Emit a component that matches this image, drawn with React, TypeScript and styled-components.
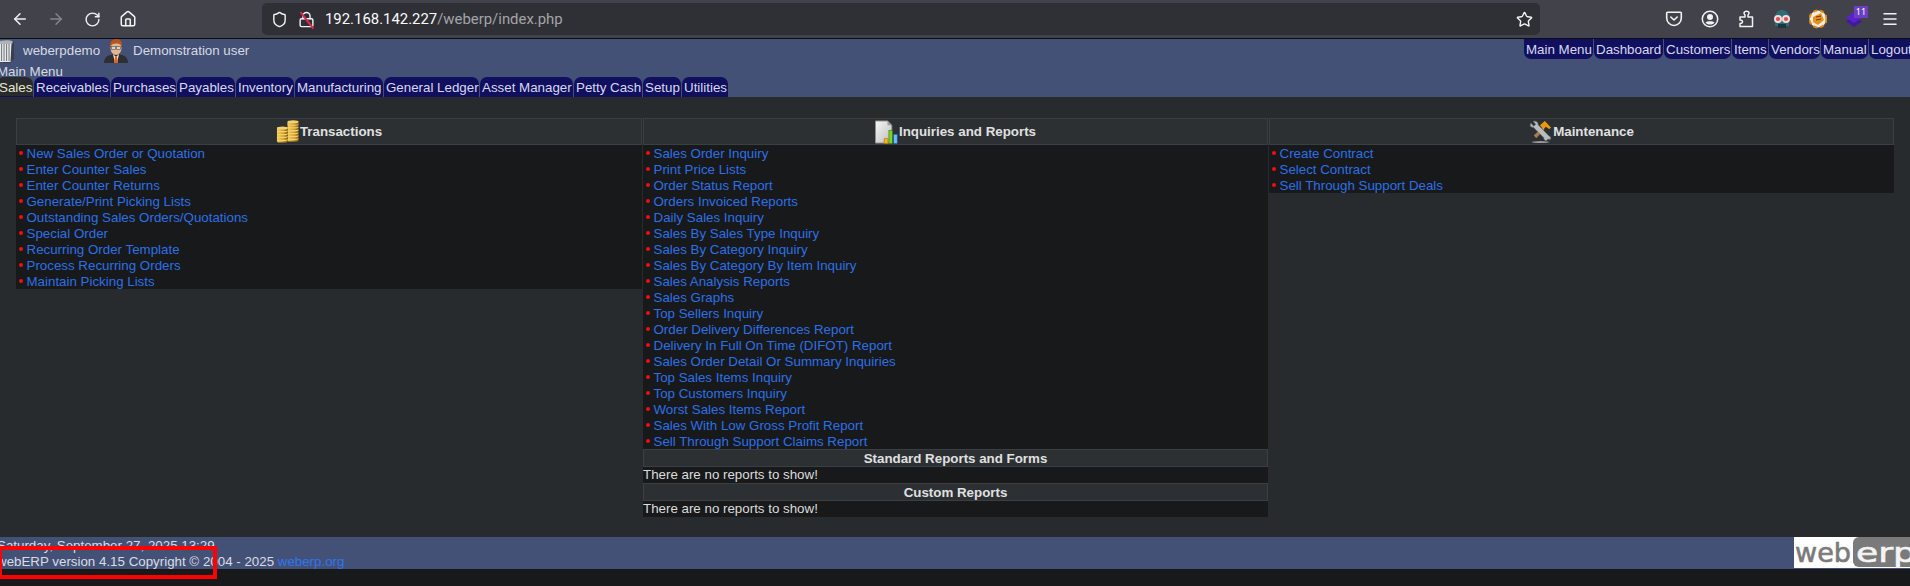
import React from 'react';
import styled, { createGlobalStyle } from 'styled-components';
import {
  ArrowLeft,
  ArrowRight,
  RotateCw,
  Home,
  Shield,
  Lock,
  Star,
  Menu
} from 'lucide-react';

const GlobalStyle = createGlobalStyle`
  html, body {
    margin: 0;
    padding: 0;
    background: #18191b;
    overflow: hidden;
  }
  #root {
    width: 1910px;
    height: 586px;
    overflow: hidden;
  }
`;

const Screen = styled.div`
  position: relative;
  width: 1910px;
  height: 586px;
  overflow: hidden;
  background: #18191b;
  font-family: 'Liberation Sans', Arial, sans-serif;
  font-size: 13.33px;
  color: #e0e0e0;
`;

const Toolbar = styled.div`
  display: flex;
  align-items: center;
  height: 38px;
  padding: 0 2px;
  background: #42434a;
  border-bottom: 1px solid #0c0c0d;
`;

const ToolButton = styled.div<{ $dim?: boolean }>`
  display: flex;
  align-items: center;
  justify-content: center;
  flex: none;
  width: 36px;
  height: 36px;
  color: ${props => (props.$dim ? '#85868b' : '#f2f2f4')};
`;

const ExtensionButton = styled(ToolButton)`
  position: relative;
`;

const Badge = styled.div`
  position: absolute;
  top: 5px;
  right: 4px;
  width: 14px;
  height: 12px;
  background: #6b3fc4;
  color: #fff;
  font-family: 'Noto Sans', sans-serif;
  font-size: 9px;
  line-height: 12px;
  text-align: center;
`;

const UrlBar = styled.div`
  display: flex;
  align-items: center;
  flex: 1;
  height: 32px;
  margin: 0 116px;
  padding: 0 7px 0 9px;
  border-radius: 5px;
  background: #2f3035;
  color: #f2f2f4;
`;

const UrlIcon = styled.div`
  display: flex;
  position: relative;
  flex: none;
  margin-right: 10px;
`;

const Slash = styled.div`
  position: absolute;
  left: 8px;
  top: -1px;
  width: 1.5px;
  height: 21px;
  background: #e22850;
  transform: rotate(-38deg);
`;

const UrlText = styled.div`
  flex: 1;
  font-family: Roboto, 'Noto Sans', sans-serif;
  font-size: 14.9px;
  color: #fbfbfe;
`;

const UrlPath = styled.span`
  color: #a4a4a8;
`;

const Page = styled.div`
  width: 1919px;
  margin-left: -3px;
`;

const Header = styled.header`
  display: flex;
  flex-direction: column;
  height: 58px;
  background: #445177;
`;

const HeaderTop = styled.div`
  display: flex;
  justify-content: space-between;
  height: 26px;
`;

const Identity = styled.div`
  display: flex;
  align-items: flex-start;
  color: #d7d9e2;
`;

const IdentityText = styled.span<{ $inset: number; $width: number }>`
  width: ${props => `${props.$width}px`};
  margin-top: 4px;
  padding-left: ${props => `${props.$inset}px`};
  line-height: 15px;
`;

const TopMenu = styled.nav`
  display: flex;
  gap: 1px;
`;

const TopTab = styled.a<{ $width: number }>`
  display: block;
  box-sizing: border-box;
  width: ${props => `${props.$width}px`};
  height: 20px;
  padding-left: 2px;
  border-radius: 0 0 7px 7px;
  background: #10105f;
  color: #d9d9ef;
  line-height: 21px;
  white-space: nowrap;
`;

const MenuTitle = styled.div`
  height: 14px;
  line-height: 17px;
  color: #d7d9e2;
`;

const ModuleTabs = styled.nav`
  position: relative;
  z-index: 1;
  display: flex;
  gap: 1px;
  height: 20px;
`;

const ModuleTab = styled.a<{ $width: number; $active?: boolean }>`
  display: block;
  box-sizing: border-box;
  width: ${props => `${props.$width}px`};
  height: 20px;
  padding-left: 2px;
  border-radius: 7px 7px 0 0;
  border-bottom: 1px solid #10105f;
  background: ${props => (props.$active ? '#272b2d' : '#10105f')};
  color: ${props => (props.$active ? '#ece6cf' : '#d9d9ef')};
  line-height: 22px;
  white-space: nowrap;
`;

const Main = styled.main`
  display: grid;
  grid-template-columns: 626px 625px 625px;
  align-items: start;
  gap: 0 1px;
  height: 419px;
  padding: 21px 0 0 19px;
  background: #272b2d;
`;

const Panel = styled.section`
  display: flex;
  flex-direction: column;
  background: #18191b;
`;

const PanelHeading = styled.h2<{ $height: number }>`
  display: flex;
  align-items: center;
  justify-content: center;
  box-sizing: border-box;
  height: ${props => `${props.$height}px`};
  margin: 0;
  border: 1px solid #3a3f42;
  background: #2c3033;
  color: #e0e0e0;
  font-size: 13.33px;
  font-weight: bold;
`;

const HeadingIcon = styled.span`
  display: flex;
  flex: none;
  width: 24px;
  height: 24px;
`;

const LinkList = styled.ul`
  margin: 0;
  padding: 0;
  list-style: none;
`;

const LinkRow = styled.li`
  display: flex;
  align-items: center;
  height: 16px;
  padding-left: 3px;
`;

const Bullet = styled.span`
  flex: none;
  width: 4px;
  height: 4px;
  margin-right: 3.5px;
  border-radius: 50%;
  background: #f40e0e;
`;

const MenuLink = styled.a`
  color: #2d70e6;
  white-space: nowrap;
`;

const EmptyNote = styled.div`
  height: 16px;
  line-height: 16px;
  color: #dcdcdc;
`;

const Footer = styled.footer`
  display: flex;
  justify-content: space-between;
  height: 32px;
  background: #445177;
  color: #dadce4;
`;

const FooterText = styled.div`
  padding-top: 1px;
  line-height: 16px;
`;

const FooterLink = styled.a`
  color: #2f74ee;
`;

const Logo = styled.svg`
  flex: none;
  width: 122px;
  height: 31px;
`;

const Annotation = styled.div`
  position: absolute;
  left: -2px;
  top: 546px;
  width: 219px;
  height: 33px;
  box-sizing: border-box;
  border: 4px solid #ff0000;
`;

const topTabs: [string, number][] = [
  ['Main Menu', 69],
  ['Dashboard', 69],
  ['Customers', 67],
  ['Items', 36],
  ['Vendors', 51],
  ['Manual', 47],
  ['Logout', 47]
];

const moduleTabs: [string, number][] = [
  ['Sales', 36],
  ['Receivables', 76],
  ['Purchases', 65],
  ['Payables', 58],
  ['Inventory', 58],
  ['Manufacturing', 88],
  ['General Ledger', 95],
  ['Asset Manager', 93],
  ['Petty Cash', 68],
  ['Setup', 38],
  ['Utilities', 46]
];

const transactions = [
  'New Sales Order or Quotation',
  'Enter Counter Sales',
  'Enter Counter Returns',
  'Generate/Print Picking Lists',
  'Outstanding Sales Orders/Quotations',
  'Special Order',
  'Recurring Order Template',
  'Process Recurring Orders',
  'Maintain Picking Lists'
];

const inquiries = [
  'Sales Order Inquiry',
  'Print Price Lists',
  'Order Status Report',
  'Orders Invoiced Reports',
  'Daily Sales Inquiry',
  'Sales By Sales Type Inquiry',
  'Sales By Category Inquiry',
  'Sales By Category By Item Inquiry',
  'Sales Analysis Reports',
  'Sales Graphs',
  'Top Sellers Inquiry',
  'Order Delivery Differences Report',
  'Delivery In Full On Time (DIFOT) Report',
  'Sales Order Detail Or Summary Inquiries',
  'Top Sales Items Inquiry',
  'Top Customers Inquiry',
  'Worst Sales Items Report',
  'Sales With Low Gross Profit Report',
  'Sell Through Support Claims Report'
];

const maintenance = [
  'Create Contract',
  'Select Contract',
  'Sell Through Support Deals'
];

const Links: React.FC<{ items: string[] }> = ({ items }) => (
  <LinkList>
    {items.map(item => (
      <LinkRow key={item}>
        <Bullet />
        <MenuLink>{item}</MenuLink>
      </LinkRow>
    ))}
  </LinkList>
);

const Coin: React.FC<{ x: number; y: number }> = ({ x, y }) => (
  <>
    <rect x={x} y={y} width="11.5" height="4" rx="1.5" fill="url(#coin)" />
    <ellipse cx={x + 5.75} cy={y + 0.8} rx="5.7" ry="1.6" fill="#f2d270" />
  </>
);

const CoinsIcon = () => (
  <svg width="25" height="24" viewBox="0 0 25 24">
    <defs>
      <linearGradient id="coin" x1="0" x2="1" y1="0" y2="0">
        <stop offset="0" stopColor="#f4cf5c" />
        <stop offset="0.6" stopColor="#d29a24" />
        <stop offset="1" stopColor="#7f5a12" />
      </linearGradient>
    </defs>
    {[18, 15, 12, 9, 6, 3, 0.5].map(y => (
      <Coin key={y} x={12} y={y} />
    ))}
    {[19, 16, 13, 10, 7].map(y => (
      <Coin key={y} x={1} y={y} />
    ))}
  </svg>
);

const ReportIcon = () => (
  <svg width="25" height="24" viewBox="0 0 25 24">
    <defs>
      <linearGradient id="page" x1="0" x2="1" y1="0" y2="1">
        <stop offset="0" stopColor="#f6f6f6" />
        <stop offset="1" stopColor="#bdbdbd" />
      </linearGradient>
    </defs>
    <path d="M0.5 0.5H13L17.5 5V23.5H0.5Z" fill="url(#page)" stroke="#8f8f8f" />
    <path d="M13 0.5V5H17.5Z" fill="#9c9c9c" />
    <rect x="9.5" y="19" width="4" height="5" fill="#f7b51d" stroke="#b06c00" strokeWidth="0.6" />
    <rect x="14.5" y="10.5" width="3.6" height="13.5" fill="#7ed321" stroke="#2f7a00" strokeWidth="0.6" />
    <rect x="19.5" y="14.5" width="3.6" height="9.5" fill="#6bbcff" stroke="#1b67b0" strokeWidth="0.6" />
  </svg>
);

const ToolsIcon = () => (
  <svg width="25" height="24" viewBox="0 0 25 24">
    <ellipse cx="12" cy="22.5" rx="9.5" ry="1" fill="#9a9a9a" />
    <path d="M5 15.5L14 7.5L16 9.5L7.5 18.5Z" fill="#a87b48" />
    <path d="M11.5 5L16.5 0.5L18.5 2.5L23 7.5L21 9L17.5 6.5L15 9.5Z" fill="#e89a0c" />
    <path
      d="M2 3L5 6L7 4L4.5 1C7 0 9.5 1.5 9.5 4.5L20.5 16C22 16.5 23 18 22.5 19.5L19.5 19.5L18 21C16.5 21 15 19.5 15.5 18L4.5 7C1.5 7.5 0.5 5 2 3Z"
      fill="#b9bdbf"
      stroke="#6d7174"
      strokeWidth="0.7"
    />
  </svg>
);

const ColumnsIcon = () => (
  <svg width="17" height="24" viewBox="0 0 17 24">
    <path d="M12 3L17 2.5V20L13 24H6Z" fill="#3a3f4c" />
    <path d="M1 3.5H14.5L13.5 23H3Z" fill="#e8eaea" />
    {[4, 6.5, 9, 11.5].map(x => (
      <rect key={x} x={x} y="4" width="1.1" height="18" fill="#7a7f85" />
    ))}
    <path d="M0 3C3 1 12 0.5 15.5 2V4.5C12 5.5 3 5.5 0 4.5Z" fill="#aeb3b8" />
  </svg>
);

const UserIcon = () => (
  <svg width="24" height="24" viewBox="0 0 24 24">
    <path d="M0 24C0 17 5 15.5 12 15C19 15.5 24 17 24 24Z" fill="#2d2f33" />
    <path d="M9 15L12 18L15 15L13 24H11Z" fill="#f2f2f2" />
    <path d="M11 17H13L14 24H10Z" fill="#e8641b" />
    <ellipse cx="12" cy="9" rx="5.5" ry="7" fill="#eab48a" />
    <path d="M6 8C5.5 2 9 0 12.5 0C17 0 18.5 3 18 8C17 5 14 4.5 12 4.5C9.5 4.5 7 5.5 6 8Z" fill="#b9541d" />
    <rect x="7.5" y="7.5" width="4" height="3" fill="#cfd6d8" stroke="#55504b" strokeWidth="0.6" />
    <rect x="12.5" y="7.5" width="4" height="3" fill="#cfd6d8" stroke="#55504b" strokeWidth="0.6" />
  </svg>
);

const PocketIcon = () => (
  <svg width="18" height="18" viewBox="0 0 18 18" fill="none" stroke="currentColor" strokeWidth="1.6">
    <path d="M2.5 2.2H15.5C16 2.2 16.3 2.6 16.3 3V8C16.3 12 13 15.5 9 15.5C5 15.5 1.7 12 1.7 8V3C1.7 2.6 2 2.2 2.5 2.2Z" />
    <path d="M5.8 7L9 10L12.2 7" strokeLinecap="round" strokeLinejoin="round" />
  </svg>
);

const AccountIcon = () => (
  <svg width="18" height="18" viewBox="0 0 18 18">
    <circle cx="9" cy="9" r="7.7" fill="none" stroke="currentColor" strokeWidth="1.5" />
    <circle cx="9" cy="7" r="3" fill="currentColor" />
    <path d="M4.5 12.5C6 10.8 12 10.8 13.5 12.5C12.5 14 11 14.6 9 14.6C7 14.6 5.5 14 4.5 12.5Z" fill="currentColor" />
  </svg>
);

const ExtensionsIcon = () => (
  <svg width="18" height="18" viewBox="0 0 18 18" fill="none" stroke="currentColor" strokeWidth="1.5" strokeLinejoin="round">
    <path d="M3 7H8V5C7.3 4.4 7 3.8 7 3.1C7 2 8 1.2 9.5 1.2C11 1.2 12 2 12 3.1C12 3.8 11.7 4.4 11 5V7H15.5V16.5H3V13.5C4.5 13.5 5.5 12.8 5.5 11.8C5.5 10.8 4.5 10 3 10Z" />
  </svg>
);

const GogglesIcon = () => (
  <svg width="20" height="20" viewBox="0 0 20 20">
    <path d="M3 9C3 3 7 1 10 1C13 1 17 3 17 9V17H3Z" fill="#2f6c78" />
    <circle cx="6" cy="10" r="4" fill="#e9dfe0" />
    <circle cx="14" cy="10" r="4" fill="#e9dfe0" />
    <circle cx="6" cy="10" r="2.1" fill="#ef4a42" />
    <circle cx="14" cy="10" r="2.1" fill="#ef4a42" />
    <rect x="6" y="15" width="8" height="4" fill="#16393f" />
  </svg>
);

const CookieIcon = () => (
  <svg width="18" height="20" viewBox="0 0 18 20">
    <circle cx="9" cy="10" r="8.5" fill="#f4ece0" />
    <circle cx="9" cy="10" r="8.5" fill="none" stroke="#e08a10" strokeWidth="2" strokeDasharray="4 3" />
    <path d="M4 8L12 4L15 11L9 16L4 13Z" fill="#e6921a" />
    <path d="M7 8L12 7M7 11L12 10" stroke="#6b3a0a" strokeWidth="1" />
  </svg>
);

const StackIcon = () => (
  <svg width="16" height="20" viewBox="0 0 16 20">
    <path d="M8 7L16 12.5L8 18L0 12.5Z" fill="#3f1aa0" />
    <path d="M8 3L16 8.5L8 14L0 8.5Z" fill="#5a22c8" />
  </svg>
);

export default function App() {
  return (
    <Screen>
      <GlobalStyle />
      <Toolbar>
        <ToolButton>
          <ArrowLeft size={18} />
        </ToolButton>
        <ToolButton $dim>
          <ArrowRight size={18} />
        </ToolButton>
        <ToolButton>
          <RotateCw size={17} />
        </ToolButton>
        <ToolButton>
          <Home size={18} />
        </ToolButton>
        <UrlBar>
          <UrlIcon>
            <Shield size={17} />
          </UrlIcon>
          <UrlIcon>
            <Lock size={17} />
            <Slash />
          </UrlIcon>
          <UrlText>
            192.168.142.227<UrlPath>/weberp/index.php</UrlPath>
          </UrlText>
          <Star size={17} />
        </UrlBar>
        <ToolButton>
          <PocketIcon />
        </ToolButton>
        <ToolButton>
          <AccountIcon />
        </ToolButton>
        <ToolButton>
          <ExtensionsIcon />
        </ToolButton>
        <ToolButton>
          <GogglesIcon />
        </ToolButton>
        <ToolButton>
          <CookieIcon />
        </ToolButton>
        <ExtensionButton>
          <StackIcon />
          <Badge>11</Badge>
        </ExtensionButton>
        <ToolButton>
          <Menu size={18} />
        </ToolButton>
      </Toolbar>

      <Page>
        <Header>
          <HeaderTop>
            <Identity>
              <ColumnsIcon />
              <IdentityText $inset={9} $width={81}>
                weberpdemo
              </IdentityText>
              <UserIcon />
              <IdentityText $inset={5} $width={130}>
                Demonstration user
              </IdentityText>
            </Identity>
            <TopMenu>
              {topTabs.map(([label, width]) => (
                <TopTab key={label} $width={width}>
                  {label}
                </TopTab>
              ))}
            </TopMenu>
          </HeaderTop>
          <MenuTitle>Main Menu</MenuTitle>
          <ModuleTabs>
            {moduleTabs.map(([label, width], index) => (
              <ModuleTab key={label} $width={width} $active={index === 0}>
                {label}
              </ModuleTab>
            ))}
          </ModuleTabs>
        </Header>

        <Main>
          <Panel>
            <PanelHeading $height={27}>
              <HeadingIcon>
                <CoinsIcon />
              </HeadingIcon>
              Transactions
            </PanelHeading>
            <Links items={transactions} />
          </Panel>
          <Panel>
            <PanelHeading $height={27}>
              <HeadingIcon>
                <ReportIcon />
              </HeadingIcon>
              Inquiries and Reports
            </PanelHeading>
            <Links items={inquiries} />
            <PanelHeading $height={18}>Standard Reports and Forms</PanelHeading>
            <EmptyNote>There are no reports to show!</EmptyNote>
            <PanelHeading $height={18}>Custom Reports</PanelHeading>
            <EmptyNote>There are no reports to show!</EmptyNote>
          </Panel>
          <Panel>
            <PanelHeading $height={27}>
              <HeadingIcon>
                <ToolsIcon />
              </HeadingIcon>
              Maintenance
            </PanelHeading>
            <Links items={maintenance} />
          </Panel>
        </Main>

        <Footer>
          <FooterText>
            Saturday, September 27, 2025 13:29
            <br />
            webERP version 4.15 Copyright © 2004 - 2025{' '}
            <FooterLink>weberp.org</FooterLink>
          </FooterText>
          <Logo viewBox="0 0 122 31">
            <rect width="122" height="31" fill="#fff" />
            <rect x="59" width="70" height="30" rx="6" fill="#7a7a7a" />
            <text
              x="1"
              y="25"
              textLength="56"
              lengthAdjust="spacingAndGlyphs"
              fontFamily="'DejaVu Sans', sans-serif"
              fontSize="27"
              fill="#7a7a7a"
              stroke="#7a7a7a"
              strokeWidth="0.6"
            >
              web
            </text>
            <text
              x="62"
              y="25"
              textLength="60"
              lengthAdjust="spacingAndGlyphs"
              fontFamily="'DejaVu Sans', sans-serif"
              fontSize="27"
              fill="#f4f4f4"
              stroke="#f4f4f4"
              strokeWidth="0.6"
            >
              erp
            </text>
          </Logo>
        </Footer>
      </Page>
      <Annotation />
    </Screen>
  );
}
